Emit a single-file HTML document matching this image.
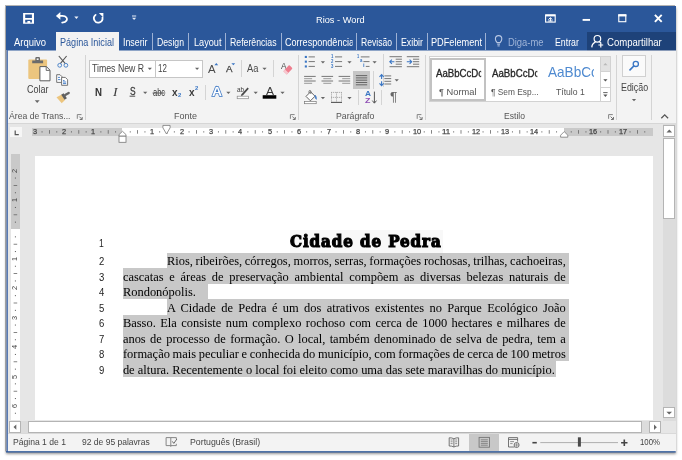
<!DOCTYPE html>
<html lang="pt-BR">
<head>
<meta charset="utf-8">
<title>Rios - Word</title>
<style>
html,body{margin:0;padding:0;}
body{width:682px;height:460px;background:#fff;overflow:hidden;position:relative;font-family:"Liberation Sans","DejaVu Sans",sans-serif;}
.a{position:absolute;}
.t{position:absolute;white-space:nowrap;transform-origin:0 50%;}
svg{position:absolute;overflow:visible;}
.win{position:absolute;left:6px;top:6px;width:669.7px;height:446px;background:#e6e6e6;box-shadow:-1px -1px 0 0 rgba(130,130,130,.6),0 2px 2.5px 0 rgba(0,0,0,.42);}
.blue{background:#2b579a;}
.rib{background:#f3f3f3;}
.vsep{position:absolute;width:1px;background:#d4d4d4;}
.tsep{position:absolute;width:1px;background:#9db1d4;top:32.5px;height:17px;}
.dl{position:absolute;white-space:nowrap;font-family:"Liberation Serif","DejaVu Serif",serif;font-size:12.46px;line-height:15.5px;color:#000;height:15.5px;}
.dj{text-align:justify;text-align-last:justify;}
.sel{position:absolute;background:#c8c8c8;}
.root{position:absolute;left:0;top:0;width:682px;height:460px;overflow:hidden;will-change:transform;}

</style>
</head>
<body>
<div class="root">
<div class="win"></div>
<div class="a blue" style="left:6px;top:6px;width:669.7px;height:44px"></div>
<div class="a rib" style="left:7px;top:50px;width:668.7px;height:73px"></div>
<div class="a" style="left:7px;top:122.5px;width:668.7px;height:1px;background:#d6d6d6"></div>
<div class="a" style="left:7px;top:50px;width:668.7px;height:1px;background:#8fa5c7"></div>
<div class="a rib" style="left:56px;top:32px;width:62.5px;height:19px"></div>
<div class="a" style="left:586.5px;top:32px;width:89.2px;height:18px;background:#1e4279"></div>
<div class="a" style="left:586.5px;top:50px;width:89.2px;height:1px;background:#8a9bb8"></div>
<span class="t" style="left:316.4px;top:14.27px;font-size:9.9px;line-height:12.87px;color:#fff;transform:scaleX(0.9355);">Rios - Word</span>
<span class="t" style="left:13.9px;top:35.64px;font-size:10.1px;line-height:13.13px;color:#fff;transform:scaleX(0.9377);">Arquivo</span>
<span class="t" style="left:60.2px;top:35.64px;font-size:10.1px;line-height:13.13px;color:#2b579a;transform:scaleX(0.8993);">Página Inicial</span>
<span class="t" style="left:123px;top:35.64px;font-size:10.1px;line-height:13.13px;color:#fff;transform:scaleX(0.8735);">Inserir</span>
<span class="t" style="left:157px;top:35.64px;font-size:10.1px;line-height:13.13px;color:#fff;transform:scaleX(0.8593);">Design</span>
<span class="t" style="left:193.5px;top:35.64px;font-size:10.1px;line-height:13.13px;color:#fff;transform:scaleX(0.9072);">Layout</span>
<span class="t" style="left:229.5px;top:35.64px;font-size:10.1px;line-height:13.13px;color:#fff;transform:scaleX(0.8631);">Referências</span>
<span class="t" style="left:284.5px;top:35.64px;font-size:10.1px;line-height:13.13px;color:#fff;transform:scaleX(0.8976);clip-path:inset(0 1.5px 0 0);">Correspondência</span>
<span class="t" style="left:361px;top:35.64px;font-size:10.1px;line-height:13.13px;color:#fff;transform:scaleX(0.8500);">Revisão</span>
<span class="t" style="left:400.5px;top:35.64px;font-size:10.1px;line-height:13.13px;color:#fff;transform:scaleX(0.8713);">Exibir</span>
<span class="t" style="left:431px;top:35.64px;font-size:10.1px;line-height:13.13px;color:#fff;transform:scaleX(0.9089);">PDFelement</span>
<span class="t" style="left:507.5px;top:35.64px;font-size:10.1px;line-height:13.13px;color:#9fb4d8;transform:scaleX(0.9304);">Diga-me</span>
<span class="t" style="left:554.6px;top:35.64px;font-size:10.1px;line-height:13.13px;color:#fff;transform:scaleX(0.8691);">Entrar</span>
<span class="t" style="left:606.7px;top:35.64px;font-size:10.1px;line-height:13.13px;color:#fff;transform:scaleX(0.9467);">Compartilhar</span>
<div class="tsep" style="left:151.5px"></div>
<div class="tsep" style="left:188.0px"></div>
<div class="tsep" style="left:224.5px"></div>
<div class="tsep" style="left:280.5px"></div>
<div class="tsep" style="left:355.8px"></div>
<div class="tsep" style="left:396.0px"></div>
<div class="tsep" style="left:426.8px"></div>
<div class="tsep" style="left:485.0px"></div>
<div class="a rib" style="left:7px;top:434.2px;width:668.7px;height:17px"></div>
<span class="t" style="left:13px;top:436.36px;font-size:9.6px;line-height:12.48px;color:#444;transform:scaleX(0.8950);">Página 1 de 1</span>
<span class="t" style="left:81.8px;top:436.36px;font-size:9.6px;line-height:12.48px;color:#444;transform:scaleX(0.8875);">92 de 95 palavras</span>
<span class="t" style="left:189.6px;top:436.36px;font-size:9.6px;line-height:12.48px;color:#444;transform:scaleX(0.9130);">Português (Brasil)</span>
<span class="t" style="left:640px;top:436.36px;font-size:9.6px;line-height:12.48px;color:#444;transform:scaleX(0.8148);">100%</span>
<div class="a" style="left:35px;top:156.4px;width:617.7px;height:264px;background:#fff"></div>
<div class="sel" style="left:167px;top:252.6px;width:401.6px;height:15.8px"></div>
<div class="sel" style="left:123px;top:268.1px;width:445.6px;height:15.8px"></div>
<div class="sel" style="left:123px;top:283.6px;width:85.1px;height:15.8px"></div>
<div class="sel" style="left:167px;top:299.1px;width:401.6px;height:15.8px"></div>
<div class="sel" style="left:123px;top:314.6px;width:445.6px;height:46.8px"></div>
<div class="sel" style="left:123px;top:361.1px;width:433.20000000000005px;height:15.8px"></div>
<div class="dl" style="left:166.9px;top:254.2px;word-spacing:-0.454px;">Rios, ribeirões, córregos, morros, serras, formações rochosas, trilhas, cachoeiras,</div>
<div class="dl" style="left:122.9px;top:269.7px;word-spacing:2.576px;">cascatas e áreas de preservação ambiental compõem as diversas belezas naturais de</div>
<div class="dl" style="left:122.9px;top:285.2px;">Rondonópolis.</div>
<div class="dl" style="left:166.9px;top:300.7px;word-spacing:2.231px;">A Cidade de Pedra é um dos atrativos existentes no Parque Ecológico João</div>
<div class="dl" style="left:122.9px;top:316.2px;word-spacing:1.296px;">Basso. Ela consiste num complexo rochoso com cerca de 1000 hectares e milhares de</div>
<div class="dl" style="left:122.9px;top:331.7px;word-spacing:1.231px;">anos de processo de formação. O local, também denominado de selva de pedra, tem a</div>
<div class="dl" style="left:122.9px;top:347.2px;word-spacing:-0.456px;">formação mais peculiar e conhecida do município, com formações de cerca de 100 metros</div>
<div class="dl" style="left:122.9px;top:362.7px;">de altura. Recentemente o local foi eleito como uma das sete maravilhas do município.</div>
<span class="t" style="left:98.8px;top:236.61px;font-size:10.3px;line-height:13.39px;color:#222;transform:scaleX(0.8371);">1</span>
<span class="t" style="left:98.7px;top:255.0px;font-size:10.3px;line-height:13.39px;color:#222;transform:scaleX(0.9243);">2</span>
<span class="t" style="left:98.7px;top:270.5px;font-size:10.3px;line-height:13.39px;color:#222;transform:scaleX(0.9243);">3</span>
<span class="t" style="left:98.7px;top:286.0px;font-size:10.3px;line-height:13.39px;color:#222;transform:scaleX(0.9243);">4</span>
<span class="t" style="left:98.7px;top:301.5px;font-size:10.3px;line-height:13.39px;color:#222;transform:scaleX(0.9243);">5</span>
<span class="t" style="left:98.7px;top:317.0px;font-size:10.3px;line-height:13.39px;color:#222;transform:scaleX(0.9243);">6</span>
<span class="t" style="left:98.7px;top:332.5px;font-size:10.3px;line-height:13.39px;color:#222;transform:scaleX(0.9243);">7</span>
<span class="t" style="left:98.7px;top:348.0px;font-size:10.3px;line-height:13.39px;color:#222;transform:scaleX(0.9243);">8</span>
<span class="t" style="left:98.7px;top:363.5px;font-size:10.3px;line-height:13.39px;color:#222;transform:scaleX(0.9243);">9</span>
<div class="a" style="left:289.5px;top:230px;width:153.8px;height:22.6px;background:#f8f8f8"></div>
<span class="t" style="left:290.4px;top:230.57px;font-size:16.2px;line-height:21.06px;color:#000;font-family:'DejaVu Serif','Liberation Serif',serif;transform:scaleX(0.9317);font-weight:bold;-webkit-text-stroke:1.2px #000;letter-spacing:1px;">Cidade de Pedra</span>
<div class="vsep" style="left:84.7px;top:55px;height:64.5px"></div>
<div class="vsep" style="left:298.1px;top:55px;height:64.5px"></div>
<div class="vsep" style="left:425.0px;top:55px;height:64.5px"></div>
<div class="vsep" style="left:616.3px;top:55px;height:64.5px"></div>
<div class="vsep" style="left:651.0px;top:55px;height:64.5px"></div>
<span class="t" style="left:27.2px;top:82.97px;font-size:10.2px;line-height:13.26px;color:#444;transform:scaleX(0.8826);">Colar</span>
<span class="t" style="left:8.8px;top:110.33px;font-size:9.8px;line-height:12.74px;color:#555;transform:scaleX(0.8823);">Área de Trans...</span>
<div class="a" style="left:89px;top:60px;width:114px;height:18px;background:#fff;box-sizing:border-box;border:1px solid #c6c6c6"></div>
<div class="a" style="left:155px;top:60px;width:1px;height:18px;background:#c6c6c6"></div>
<span class="t" style="left:92.4px;top:62.14px;font-size:10.4px;line-height:13.52px;color:#444;transform:scaleX(0.8407);">Times New R</span>
<span class="t" style="left:158.4px;top:62.14px;font-size:10.4px;line-height:13.52px;color:#444;transform:scaleX(0.7611);">12</span>
<span class="t" style="left:94.5px;top:85.64px;font-size:10.4px;line-height:13.52px;color:#333;transform:scaleX(0.9314);font-weight:bold;">N</span>
<span class="t" style="left:113.2px;top:84.93px;font-size:11.5px;line-height:14.95px;color:#3b3b3b;font-family:'Liberation Serif',serif;transform:scaleX(1.1967);font-style:italic;">I</span>
<span class="t" style="left:129.6px;top:85.01px;font-size:10.6px;line-height:13.78px;color:#3b3b3b;transform:scaleX(0.7912);-webkit-text-stroke:0.3px #3b3b3b;">S</span>
<span class="t" style="left:152.9px;top:85.57px;font-size:10.2px;line-height:13.26px;color:#3b3b3b;transform:scaleX(0.7361);">abc</span>
<span class="t" style="left:171.6px;top:85.18px;font-size:10.8px;line-height:14.04px;color:#3b3b3b;transform:scaleX(0.9309);font-weight:bold;">x</span>
<span class="t" style="left:177.6px;top:91.66px;font-size:5.6px;line-height:7.28px;color:#3a76c4;transform:scaleX(1.0560);font-weight:bold;">2</span>
<span class="t" style="left:188.8px;top:85.18px;font-size:10.8px;line-height:14.04px;color:#3b3b3b;transform:scaleX(0.9309);font-weight:bold;">x</span>
<span class="t" style="left:194.7px;top:84.96px;font-size:5.6px;line-height:7.28px;color:#3a76c4;transform:scaleX(1.0560);font-weight:bold;">2</span>
<span class="t" style="left:208.2px;top:61.72px;font-size:11.2px;line-height:14.56px;color:#4a4a4a;transform:scaleX(1.0176);">A</span>
<span class="t" style="left:225.8px;top:64.18px;font-size:8.8px;line-height:11.44px;color:#444;transform:scaleX(1.1064);-webkit-text-stroke:0.25px #444;">A</span>
<div class="vsep" style="left:240.6px;top:60px;height:16.6px"></div>
<span class="t" style="left:246.9px;top:61.54px;font-size:10.4px;line-height:13.52px;color:#4a4a4a;transform:scaleX(0.8963);">Aa</span>
<div class="vsep" style="left:272.8px;top:60px;height:16.6px"></div>
<span class="t" style="left:281px;top:60.74px;font-size:8.4px;line-height:10.92px;color:#4a4a4a;">A</span>
<div class="vsep" style="left:205.4px;top:84.6px;height:15.8px"></div>
<span class="t" style="left:212px;top:83.19px;font-size:13.4px;line-height:17.42px;color:#fff;transform:scaleX(1.0339);font-weight:bold;-webkit-text-stroke:1.5px #3a76c4;paint-order:stroke fill;">A</span>
<span class="t" style="left:236.9px;top:85.06px;font-size:7.6px;line-height:9.88px;color:#3b3b3b;transform:scaleX(0.8399);">ab</span>
<span class="t" style="left:266.2px;top:83.72px;font-size:11.2px;line-height:14.56px;color:#3b3b3b;transform:scaleX(1.0711);">A</span>
<span class="t" style="left:173.5px;top:110.33px;font-size:9.8px;line-height:12.74px;color:#555;transform:scaleX(0.9177);">Fonte</span>
<span class="t" style="left:331.2px;top:54.01px;font-size:4.6px;line-height:5.98px;color:#3a76c4;transform:scaleX(0.9366);font-weight:bold;">1</span>
<span class="t" style="left:331.2px;top:58.71px;font-size:4.6px;line-height:5.98px;color:#3a76c4;transform:scaleX(0.9366);font-weight:bold;">2</span>
<span class="t" style="left:331.2px;top:63.51px;font-size:4.6px;line-height:5.98px;color:#3a76c4;transform:scaleX(0.9366);font-weight:bold;">3</span>
<span class="t" style="left:357.2px;top:53.61px;font-size:4.6px;line-height:5.98px;color:#3a76c4;transform:scaleX(0.8585);font-weight:bold;">1</span>
<span class="t" style="left:359.6px;top:58.41px;font-size:4.6px;line-height:5.98px;color:#3a76c4;transform:scaleX(0.9366);font-weight:bold;">a</span>
<span class="t" style="left:362.6px;top:63.21px;font-size:4.6px;line-height:5.98px;color:#3a76c4;transform:scaleX(1.2488);font-weight:bold;">i</span>
<div class="vsep" style="left:383.3px;top:53.5px;height:33.8px"></div>
<div class="a" style="left:353.2px;top:71.3px;width:17px;height:17.7px;background:#c6c6c6"></div>
<div class="vsep" style="left:373.3px;top:71.3px;height:17.7px"></div>
<div class="vsep" style="left:358.2px;top:89.5px;height:15px"></div>
<span class="t" style="left:365.2px;top:89.26px;font-size:7.6px;line-height:9.88px;color:#3a76c4;transform:scaleX(1.0940);font-weight:bold;">A</span>
<span class="t" style="left:365.4px;top:95.86px;font-size:7.6px;line-height:9.88px;color:#8f4fb5;transform:scaleX(1.1636);font-weight:bold;">Z</span>
<div class="vsep" style="left:381.4px;top:89.5px;height:15px"></div>
<span class="t" style="left:390.2px;top:90.07px;font-size:12.2px;line-height:15.86px;color:#666;transform:scaleX(1.1303);">¶</span>
<span class="t" style="left:336.2px;top:110.33px;font-size:9.8px;line-height:12.74px;color:#555;transform:scaleX(0.8924);">Parágrafo</span>
<div class="a" style="left:429.2px;top:56.2px;width:181.6px;height:46.2px;background:#fff;box-sizing:border-box;border:1px solid #d2d2d2"></div>
<div class="a" style="left:430.4px;top:57.5px;width:55.6px;height:43.6px;box-sizing:border-box;border:2px solid #c2c2c2"></div>
<span class="t" style="left:435.5px;top:67.14px;font-size:10.1px;line-height:13.13px;color:#262626;transform:scaleX(0.9539);clip-path:inset(0 2px 0 0);-webkit-text-stroke:0.3px #262626;">AaBbCcDc</span>
<span class="t" style="left:439.3px;top:85.83px;font-size:9.8px;line-height:12.74px;color:#555;transform:scaleX(0.9479);">¶ Normal</span>
<span class="t" style="left:491.7px;top:67.14px;font-size:10.1px;line-height:13.13px;color:#262626;transform:scaleX(0.9580);clip-path:inset(0 2px 0 0);-webkit-text-stroke:0.3px #262626;">AaBbCcDc</span>
<span class="t" style="left:490.8px;top:85.83px;font-size:9.8px;line-height:12.74px;color:#555;transform:scaleX(0.8514);">¶ Sem Esp...</span>
<span class="t" style="left:547.8px;top:63.11px;font-size:14.6px;line-height:18.98px;color:#4f8ad0;transform:scaleX(0.9300);clip-path:inset(0 4.2px 0 0);">AaBbCc</span>
<span class="t" style="left:556px;top:85.83px;font-size:9.8px;line-height:12.74px;color:#555;transform:scaleX(0.8811);">Título 1</span>
<div class="a" style="left:599.9px;top:56.2px;width:10.9px;height:46.2px;background:#fff;box-sizing:border-box;border:1px solid #d2d2d2"></div>
<div class="a" style="left:599.9px;top:56.2px;width:10.9px;height:16px;background:#e2e2e2;box-sizing:border-box;border:1px solid #d2d2d2"></div>
<div class="a" style="left:599.9px;top:87.1px;width:10.9px;height:1px;background:#d2d2d2"></div>
<span class="t" style="left:504.1px;top:110.33px;font-size:9.8px;line-height:12.74px;color:#555;transform:scaleX(0.8761);">Estilo</span>
<div class="a" style="left:622.1px;top:54.5px;width:23.6px;height:22.8px;background:#fafafa;box-sizing:border-box;border:1px solid #d0d0d0"></div>
<span class="t" style="left:620.7px;top:81.24px;font-size:10.4px;line-height:13.52px;color:#444;transform:scaleX(0.8527);">Edição</span>
<div class="a" style="left:31.7px;top:127.9px;width:620.9px;height:7.699999999999989px;background:#c9c9c9"></div>
<div class="a" style="left:121.8px;top:127.9px;width:442.40000000000003px;height:7.699999999999989px;background:#fff"></div>
<span class="t" style="left:32.65px;top:126.7px;font-size:8px;line-height:10.4px;color:#444;transform:scaleX(0.9207);-webkit-text-stroke:0.25px #444;">3</span>
<span class="t" style="left:62.05px;top:126.7px;font-size:8px;line-height:10.4px;color:#444;transform:scaleX(0.9207);-webkit-text-stroke:0.25px #444;">2</span>
<span class="t" style="left:91.45px;top:126.7px;font-size:8px;line-height:10.4px;color:#444;transform:scaleX(0.9207);-webkit-text-stroke:0.25px #444;">1</span>
<span class="t" style="left:150.25px;top:126.7px;font-size:8px;line-height:10.4px;color:#444;transform:scaleX(0.9207);-webkit-text-stroke:0.25px #444;">1</span>
<span class="t" style="left:179.65px;top:126.7px;font-size:8px;line-height:10.4px;color:#444;transform:scaleX(0.9207);-webkit-text-stroke:0.25px #444;">2</span>
<span class="t" style="left:209.05px;top:126.7px;font-size:8px;line-height:10.4px;color:#444;transform:scaleX(0.9207);-webkit-text-stroke:0.25px #444;">3</span>
<span class="t" style="left:238.45px;top:126.7px;font-size:8px;line-height:10.4px;color:#444;transform:scaleX(0.9207);-webkit-text-stroke:0.25px #444;">4</span>
<span class="t" style="left:267.85px;top:126.7px;font-size:8px;line-height:10.4px;color:#444;transform:scaleX(0.9207);-webkit-text-stroke:0.25px #444;">5</span>
<span class="t" style="left:297.25px;top:126.7px;font-size:8px;line-height:10.4px;color:#444;transform:scaleX(0.9207);-webkit-text-stroke:0.25px #444;">6</span>
<span class="t" style="left:326.65px;top:126.7px;font-size:8px;line-height:10.4px;color:#444;transform:scaleX(0.9207);-webkit-text-stroke:0.25px #444;">7</span>
<span class="t" style="left:356.05px;top:126.7px;font-size:8px;line-height:10.4px;color:#444;transform:scaleX(0.9207);-webkit-text-stroke:0.25px #444;">8</span>
<span class="t" style="left:385.45px;top:126.7px;font-size:8px;line-height:10.4px;color:#444;transform:scaleX(0.9207);-webkit-text-stroke:0.25px #444;">9</span>
<span class="t" style="left:412.8px;top:126.7px;font-size:8px;line-height:10.4px;color:#444;transform:scaleX(0.9207);-webkit-text-stroke:0.25px #444;">10</span>
<span class="t" style="left:442.2px;top:126.7px;font-size:8px;line-height:10.4px;color:#444;transform:scaleX(0.9865);-webkit-text-stroke:0.25px #444;">11</span>
<span class="t" style="left:471.6px;top:126.7px;font-size:8px;line-height:10.4px;color:#444;transform:scaleX(0.9207);-webkit-text-stroke:0.25px #444;">12</span>
<span class="t" style="left:501.0px;top:126.7px;font-size:8px;line-height:10.4px;color:#444;transform:scaleX(0.9207);-webkit-text-stroke:0.25px #444;">13</span>
<span class="t" style="left:530.4px;top:126.7px;font-size:8px;line-height:10.4px;color:#444;transform:scaleX(0.9207);-webkit-text-stroke:0.25px #444;">14</span>
<span class="t" style="left:589.2px;top:126.7px;font-size:8px;line-height:10.4px;color:#444;transform:scaleX(0.9207);-webkit-text-stroke:0.25px #444;">16</span>
<span class="t" style="left:618.6px;top:126.7px;font-size:8px;line-height:10.4px;color:#444;transform:scaleX(0.9207);-webkit-text-stroke:0.25px #444;">17</span>
<div class="a" style="left:9.8px;top:126.6px;width:12.7px;height:10.6px;background:#f6f6f6"></div>
<div class="a" style="left:11px;top:154.4px;width:8.8px;height:266px;background:#fff"></div>
<div class="a" style="left:11px;top:154.4px;width:8.8px;height:75.1px;background:#c9c9c9"></div>
<span class="t" style="left:15.4px;top:200.1px;font-size:8px;line-height:8px;color:#444;transform:translate(-50%,-50%) rotate(-90deg) scaleX(0.92);transform-origin:50% 50%;">1</span>
<span class="t" style="left:15.4px;top:170.7px;font-size:8px;line-height:8px;color:#444;transform:translate(-50%,-50%) rotate(-90deg) scaleX(0.92);transform-origin:50% 50%;">2</span>
<span class="t" style="left:15.4px;top:258.9px;font-size:8px;line-height:8px;color:#444;transform:translate(-50%,-50%) rotate(-90deg) scaleX(0.92);transform-origin:50% 50%;">1</span>
<span class="t" style="left:15.4px;top:288.3px;font-size:8px;line-height:8px;color:#444;transform:translate(-50%,-50%) rotate(-90deg) scaleX(0.92);transform-origin:50% 50%;">2</span>
<span class="t" style="left:15.4px;top:317.7px;font-size:8px;line-height:8px;color:#444;transform:translate(-50%,-50%) rotate(-90deg) scaleX(0.92);transform-origin:50% 50%;">3</span>
<span class="t" style="left:15.4px;top:347.1px;font-size:8px;line-height:8px;color:#444;transform:translate(-50%,-50%) rotate(-90deg) scaleX(0.92);transform-origin:50% 50%;">4</span>
<span class="t" style="left:15.4px;top:376.5px;font-size:8px;line-height:8px;color:#444;transform:translate(-50%,-50%) rotate(-90deg) scaleX(0.92);transform-origin:50% 50%;">5</span>
<span class="t" style="left:15.4px;top:405.9px;font-size:8px;line-height:8px;color:#444;transform:translate(-50%,-50%) rotate(-90deg) scaleX(0.92);transform-origin:50% 50%;">6</span>
<div class="a" style="left:663.3px;top:123px;width:12.4px;height:298px;background:#dcdcdc"></div>
<div class="a" style="left:663.3px;top:125.4px;width:11.6px;height:11.6px;box-sizing:border-box;border:1px solid #b4b4b4;background:#fff"></div>
<div class="a" style="left:663.3px;top:137.7px;width:11.6px;height:81.4px;box-sizing:border-box;border:1px solid #b4b4b4;background:#fff"></div>
<div class="a" style="left:663.3px;top:407px;width:11.6px;height:11.4px;box-sizing:border-box;border:1px solid #b4b4b4;background:#fff"></div>
<div class="a" style="left:7px;top:420.6px;width:668.7px;height:12.9px;background:#e6e6e6"></div>
<div class="a" style="left:20.6px;top:421.4px;width:628.8px;height:11.4px;background:#dcdcdc"></div>
<div class="a" style="left:9px;top:421.4px;width:11.6px;height:11.3px;box-sizing:border-box;border:1px solid #b4b4b4;background:#fff"></div>
<div class="a" style="left:28px;top:421.4px;width:614.4px;height:11.3px;box-sizing:border-box;border:1px solid #b4b4b4;background:#fff"></div>
<div class="a" style="left:649.3px;top:421.4px;width:11.4px;height:11.3px;box-sizing:border-box;border:1px solid #b4b4b4;background:#fff"></div>
<div class="a" style="left:7px;top:433.4px;width:668.7px;height:1px;background:#d9d9d9"></div>
<div class="a" style="left:469.3px;top:434.3px;width:29.4px;height:16.6px;background:#c8c8c8"></div>
<svg width="682" height="460" viewBox="0 0 682 460" style="left:0;top:0">
<rect x="5.6" y="50" width="1" height="402" fill="#9a9a9a"/>
<rect x="6.5" y="50" width="1.4" height="402" fill="#4a6fae"/>
<rect x="6" y="451.2" width="669.7" height="1.3" fill="#2b579a"/>
<rect x="28.3" y="59.6" width="18.8" height="19.4" rx="1" fill="#ecc57e"/>
<path d="M32.2 63.2 V60.6 H35.3 V58.2 Q35.3 57.1 36.4 57.1 H38.9 Q40 57.1 40 58.2 V60.6 H43.1 V63.2 Z" fill="#6b6b6b"/>
<rect x="36.7" y="58.4" width="1.9" height="1.6" fill="#f3f3f3"/>
<path d="M39.9 66.6 H46.4 L50 70.2 V80.8 H39.9 Z" fill="#fff" stroke="#5a5a5a" stroke-width="1" stroke-linejoin="miter"/>
<path d="M46.2 66.8 V70.4 H49.8" fill="none" stroke="#5a5a5a" stroke-width="0.9"/>
<path d="M34.8 100.3 H39.6 L37.2 102.9 Z" fill="#666"/>
<path d="M58.8 56 L65.3 63.6 M66.6 56 L60.3 63.6" stroke="#555" stroke-width="1.1" fill="none"/>
<circle cx="59.7" cy="65.3" r="1.9" fill="none" stroke="#4c84c8" stroke-width="1"/>
<circle cx="65.9" cy="65.3" r="1.9" fill="none" stroke="#4c84c8" stroke-width="1"/>
<path d="M56.7 74.7 H60 L62 76.7 V82.4 H56.7 Z" fill="#fff" stroke="#666" stroke-width="0.9"/>
<path d="M61.6 77.4 H65.3 L67.6 79.7 V85.3 H61.6 Z" fill="#fff" stroke="#666" stroke-width="0.9"/>
<path d="M58 77.4 H60 M58 79.6 H60.4 M63 80.6 H64.6 M63 82 H66.2 M63 83.6 H66.2" stroke="#3a76c4" stroke-width="0.9"/>
<path d="M56.5 97.2 L61.8 94.6 L65 100 L61.7 103.3 Z" fill="#ecc57e"/>
<path d="M61.2 94.7 L63.6 93.3 L66.9 98.2 L64.6 99.7 Z" fill="#5f5f5f"/>
<path d="M65.2 95 L68.7 92.9" stroke="#666" stroke-width="2.3" stroke-linecap="round"/>
<path d="M77.3 118.8 V114.6 H81.5" fill="none" stroke="#777" stroke-width="0.9"/>
<path d="M79.3 116.6 L81.89999999999999 119.19999999999999 M82.2 117.0 V119.5 H79.7" fill="none" stroke="#666" stroke-width="0.9"/>
<path d="M147.70000000000002 67.8 H151.9 L149.8 70.1 Z" fill="#666"/>
<path d="M195.0 67.8 H199.2 L197.1 70.1 Z" fill="#666"/>
<path d="M129.6 96.2 H135.2" stroke="#3b3b3b" stroke-width="0.9"/>
<path d="M143.1 91.8 H147.29999999999998 L145.2 94.1 Z" fill="#666"/>
<path d="M152.6 93 H165.3" stroke="#3b3b3b" stroke-width="0.8"/>
<path d="M214.4 65.2 H218.2 L216.3 63.1 Z" fill="#3a76c4"/>
<path d="M231.4 63.2 H235.2 L233.3 65.3 Z" fill="#3a76c4"/>
<path d="M262.4 67.8 H266.6 L264.5 70.1 Z" fill="#666"/>
<path d="M283.4 71.2 L288.6 65.6 Q289.2 65 289.8 65.6 L292 67.8 Q292.6 68.4 292 69 L286.8 74.4 Z" fill="#ee7d8e"/>
<path d="M283.4 71.2 L285 69.5 L288.4 72.8 L286.8 74.4 Z" fill="#f7c9d0"/>
<path d="M226.3 91.8 H230.5 L228.4 94.1 Z" fill="#666"/>
<path d="M241.2 94.6 L247.6 87.6 L248.8 88.7 L242.8 95.6 L240.9 96 Z" fill="#4a4a4a"/>
<rect x="237.2" y="96.2" width="11.2" height="2.5" fill="#fff" stroke="#8a8a8a" stroke-width="0.7"/>
<path d="M253.6 91.8 H257.8 L255.7 94.1 Z" fill="#666"/>
<rect x="262.7" y="95.2" width="13.6" height="3.5" fill="#000"/>
<path d="M280.4 91.8 H284.6 L282.5 94.1 Z" fill="#666"/>
<path d="M290.4 118.8 V114.6 H294.59999999999997" fill="none" stroke="#777" stroke-width="0.9"/>
<path d="M292.4 116.6 L295.0 119.19999999999999 M295.29999999999995 117.0 V119.5 H292.79999999999995" fill="none" stroke="#666" stroke-width="0.9"/>
<rect x="304.8" y="55.9" width="2.1" height="2.1" fill="#3a76c4"/>
<path d="M308.6 56.9 H314.9" stroke="#777" stroke-width="1"/>
<rect x="304.8" y="60.6" width="2.1" height="2.1" fill="#3a76c4"/>
<path d="M308.6 61.6 H314.9" stroke="#777" stroke-width="1"/>
<rect x="304.8" y="65.4" width="2.1" height="2.1" fill="#3a76c4"/>
<path d="M308.6 66.4 H314.9" stroke="#777" stroke-width="1"/>
<path d="M320.79999999999995 61.2 H325.0 L322.9 63.5 Z" fill="#666"/>
<path d="M335 56.9 H342.1" stroke="#777" stroke-width="1"/>
<path d="M335 61.6 H342.1" stroke="#777" stroke-width="1"/>
<path d="M335 66.4 H342.1" stroke="#777" stroke-width="1"/>
<path d="M347.4 61.2 H351.6 L349.5 63.5 Z" fill="#666"/>
<path d="M360.8 56.9 H369.5" stroke="#777" stroke-width="1"/>
<path d="M363.4 61.6 H369.5" stroke="#777" stroke-width="1"/>
<path d="M365.8 66.4 H369.5" stroke="#777" stroke-width="1"/>
<path d="M372.5 61.2 H376.70000000000005 L374.6 63.5 Z" fill="#666"/>
<path d="M389.5 56.7 H401.9" stroke="#777" stroke-width="1"/>
<path d="M389.5 66.7 H401.9" stroke="#777" stroke-width="1"/>
<path d="M395.7 59.2 H401.9" stroke="#777" stroke-width="1"/>
<path d="M395.7 61.7 H401.9" stroke="#777" stroke-width="1"/>
<path d="M395.7 64.2 H401.9" stroke="#777" stroke-width="1"/>
<path d="M389.8 61.7 H394.4 M391.9 59.6 L389.8 61.7 L391.9 63.8" fill="none" stroke="#3a76c4" stroke-width="1.1"/>
<path d="M406.8 56.7 H419.2" stroke="#777" stroke-width="1"/>
<path d="M406.8 66.7 H419.2" stroke="#777" stroke-width="1"/>
<path d="M413.0 59.2 H419.2" stroke="#777" stroke-width="1"/>
<path d="M413.0 61.7 H419.2" stroke="#777" stroke-width="1"/>
<path d="M413.0 64.2 H419.2" stroke="#777" stroke-width="1"/>
<path d="M406.8 61.7 H411.40000000000003 M409.6 59.6 L411.7 61.7 L409.6 63.8" fill="none" stroke="#3a76c4" stroke-width="1.1"/>
<path d="M304.1 76.4 H315.70000000000005" stroke="#777" stroke-width="1"/>
<path d="M304.1 78.7 H312.1" stroke="#999" stroke-width="1"/>
<path d="M304.1 81.0 H315.70000000000005" stroke="#777" stroke-width="1"/>
<path d="M304.1 83.3 H312.1" stroke="#999" stroke-width="1"/>
<path d="M321.5 76.4 H333.1" stroke="#777" stroke-width="1"/>
<path d="M323.3 78.7 H331.3" stroke="#999" stroke-width="1"/>
<path d="M321.5 81.0 H333.1" stroke="#777" stroke-width="1"/>
<path d="M323.3 83.3 H331.3" stroke="#999" stroke-width="1"/>
<path d="M338.6 76.4 H350.20000000000005" stroke="#777" stroke-width="1"/>
<path d="M342.20000000000005 78.7 H350.20000000000005" stroke="#999" stroke-width="1"/>
<path d="M338.6 81.0 H350.20000000000005" stroke="#777" stroke-width="1"/>
<path d="M342.20000000000005 83.3 H350.20000000000005" stroke="#999" stroke-width="1"/>
<path d="M355.9 75.6 H367.2" stroke="#666" stroke-width="1"/>
<path d="M355.9 77.9 H367.2" stroke="#666" stroke-width="1"/>
<path d="M355.9 80.2 H367.2" stroke="#666" stroke-width="1"/>
<path d="M355.9 82.5 H367.2" stroke="#666" stroke-width="1"/>
<path d="M355.9 84.8 H367.2" stroke="#666" stroke-width="1"/>
<path d="M384.4 75.9 H391.2" stroke="#777" stroke-width="1"/>
<path d="M384.4 78.6 H391.2" stroke="#777" stroke-width="1"/>
<path d="M384.4 81.3 H391.2" stroke="#777" stroke-width="1"/>
<path d="M384.4 84 H391.2" stroke="#777" stroke-width="1"/>
<path d="M381.6 74.8 V79 M381.6 81.2 V85.6 M379.5 76.9 L381.6 74.6 L383.7 76.9 M379.5 83.4 L381.6 85.7 L383.7 83.4" fill="none" stroke="#3a76c4" stroke-width="1.1"/>
<path d="M394.59999999999997 79.2 H398.8 L396.7 81.5 Z" fill="#666"/>
<path d="M306 96.4 L310.6 91.8 L315 96.2 L310.4 100.8 Z" fill="#fff" stroke="#555" stroke-width="0.9" stroke-linejoin="round"/>
<path d="M309 93.2 V91.4 Q309 90.5 309.9 90.5 Q310.8 90.5 310.8 91.4 V94" fill="none" stroke="#555" stroke-width="0.8"/>
<path d="M315 95 Q316.9 96.6 316.4 99.4 Q314.8 98.6 315 95 Z" fill="#3a76c4" stroke="#3a76c4" stroke-width="0.6"/>
<rect x="304.4" y="101.4" width="11.8" height="2.3" fill="#fff" stroke="#777" stroke-width="0.7"/>
<path d="M320.79999999999995 96.9 H325.0 L322.9 99.2 Z" fill="#666"/>
<path d="M331.2 92.4 H341.8 M331.2 97.4 H341.8 M331.5 92.4 V102 M336.5 92.4 V102 M341.5 92.4 V102" fill="none" stroke="#8a8a8a" stroke-width="0.8" stroke-dasharray="1 1"/>
<path d="M331 102.4 H342" stroke="#555" stroke-width="1.1"/>
<path d="M347.4 96.9 H351.6 L349.5 99.2 Z" fill="#666"/>
<path d="M374.4 91.6 V103 M372.3 100.6 L374.4 103.2 L376.5 100.6" fill="none" stroke="#555" stroke-width="1"/>
<path d="M417.2 118.8 V114.6 H421.4" fill="none" stroke="#777" stroke-width="0.9"/>
<path d="M419.2 116.6 L421.8 119.19999999999999 M422.09999999999997 117.0 V119.5 H419.59999999999997" fill="none" stroke="#666" stroke-width="0.9"/>
<path d="M603.3 65.3 H607.5 L605.4 63 Z" fill="#b8b8b8"/>
<path d="M603.3 79.2 H607.5 L605.4 81.5 Z" fill="#555"/>
<path d="M603.2 92.6 H607.6" stroke="#555" stroke-width="0.9"/>
<path d="M603.3 94.6 H607.5 L605.4 96.89999999999999 Z" fill="#555"/>
<path d="M608.6 118.8 V114.6 H612.8000000000001" fill="none" stroke="#777" stroke-width="0.9"/>
<path d="M610.6 116.6 L613.2 119.19999999999999 M613.5 117.0 V119.5 H611.0" fill="none" stroke="#666" stroke-width="0.9"/>
<circle cx="635.8" cy="63.9" r="2.6" fill="none" stroke="#3a76c4" stroke-width="1.3"/>
<path d="M633.8 66 L630 69.9" stroke="#3a76c4" stroke-width="1.7" stroke-linecap="round"/>
<path d="M631.9 99 H636.1 L634 101.3 Z" fill="#666"/>
<path d="M661.3 118.2 L664.7 114.9 L668.1 118.2" fill="none" stroke="#555" stroke-width="1.3"/>
<path fill-rule="evenodd" fill="#fff" d="M23.1 12.9 H34 V23.7 H23.1 Z M25.2 14.4 V18 H31.9 V14.4 Z M25.2 19.8 V22.5 H27.4 V20.9 H30.2 V22.5 H31.9 V19.8 Z"/>
<path d="M59 15.9 H62.4 C66.4 15.9 67.7 18.6 66.6 20.5 C65.7 22 64 22.5 62.2 22.7" fill="none" stroke="#fff" stroke-width="1.8" stroke-linecap="round"/>
<path d="M55.9 15.9 L60.4 12.1 V19.7 Z" fill="#fff"/>
<path d="M74.3 16.6 H78.5 L76.4 19 Z" fill="#eef2f9"/>
<path d="M102.5 17.6 A4.3 4.3 0 1 1 95.6 14.9" fill="none" stroke="#fff" stroke-width="1.8" stroke-linecap="round"/>
<path d="M98.9 12.9 H103.4 V17.6 Z" fill="#fff"/>
<path d="M132 16 H136.2" stroke="#e6ecf6" stroke-width="1"/>
<path d="M132 17.7 H136.2 L134.1 20 Z" fill="#e6ecf6"/>
<rect x="545.6" y="14.9" width="9.6" height="7.2" fill="none" stroke="#fff" stroke-width="1.1"/>
<path d="M545.6 15.5 H555.2" stroke="#fff" stroke-width="1.8"/>
<path d="M550.4 21.2 V18 M548.4 19.6 L550.4 17.7 L552.4 19.6 M548.2 21 H552.6" fill="none" stroke="#fff" stroke-width="1"/>
<path d="M582.6 19.9 H590" stroke="#fff" stroke-width="1.9"/>
<rect x="618.8" y="15.2" width="7" height="6.5" fill="none" stroke="#fff" stroke-width="1.1"/>
<path d="M618.2 15.3 H626.4" stroke="#fff" stroke-width="2.3"/>
<path d="M654.9 14.9 L661.7 21.9 M661.7 14.9 L654.9 21.9" stroke="#fff" stroke-width="1.9"/>
<path d="M497.1 42.6 Q495.4 40.6 495.4 38.9 Q495.4 35.6 498.6 35.6 Q501.8 35.6 501.8 38.9 Q501.8 40.6 500.1 42.6 Z" fill="none" stroke="#b9c8e4" stroke-width="1.1"/>
<path d="M497.2 44.2 H500 M497.5 45.9 H499.7" stroke="#b9c8e4" stroke-width="1"/>
<circle cx="597.4" cy="38.8" r="3.3" fill="none" stroke="#fff" stroke-width="1.2"/>
<path d="M591.8 47.4 Q592 43.6 595.4 42.2 M599.4 42.2 Q600.2 42.5 600.8 43" fill="none" stroke="#fff" stroke-width="1.3"/>
<path d="M598.4 45 H603.2 M600.8 42.6 V47.4" stroke="#fff" stroke-width="1.2"/>
<rect x="41.55" y="131.4" width="1" height="1" fill="#555"/>
<rect x="56.25" y="131.4" width="1" height="1" fill="#555"/>
<rect x="49.00" y="130.1" width="0.8" height="3.6" fill="#666"/>
<rect x="70.95" y="131.4" width="1" height="1" fill="#555"/>
<rect x="85.65" y="131.4" width="1" height="1" fill="#555"/>
<rect x="78.40" y="130.1" width="0.8" height="3.6" fill="#666"/>
<rect x="100.35" y="131.4" width="1" height="1" fill="#555"/>
<rect x="115.05" y="131.4" width="1" height="1" fill="#555"/>
<rect x="107.80" y="130.1" width="0.8" height="3.6" fill="#666"/>
<rect x="129.75" y="131.4" width="1" height="1" fill="#555"/>
<rect x="144.45" y="131.4" width="1" height="1" fill="#555"/>
<rect x="137.20" y="130.1" width="0.8" height="3.6" fill="#666"/>
<rect x="159.15" y="131.4" width="1" height="1" fill="#555"/>
<rect x="173.85" y="131.4" width="1" height="1" fill="#555"/>
<rect x="166.60" y="130.1" width="0.8" height="3.6" fill="#666"/>
<rect x="188.55" y="131.4" width="1" height="1" fill="#555"/>
<rect x="203.25" y="131.4" width="1" height="1" fill="#555"/>
<rect x="196.00" y="130.1" width="0.8" height="3.6" fill="#666"/>
<rect x="217.95" y="131.4" width="1" height="1" fill="#555"/>
<rect x="232.65" y="131.4" width="1" height="1" fill="#555"/>
<rect x="225.40" y="130.1" width="0.8" height="3.6" fill="#666"/>
<rect x="247.35" y="131.4" width="1" height="1" fill="#555"/>
<rect x="262.05" y="131.4" width="1" height="1" fill="#555"/>
<rect x="254.80" y="130.1" width="0.8" height="3.6" fill="#666"/>
<rect x="276.75" y="131.4" width="1" height="1" fill="#555"/>
<rect x="291.45" y="131.4" width="1" height="1" fill="#555"/>
<rect x="284.20" y="130.1" width="0.8" height="3.6" fill="#666"/>
<rect x="306.15" y="131.4" width="1" height="1" fill="#555"/>
<rect x="320.85" y="131.4" width="1" height="1" fill="#555"/>
<rect x="313.60" y="130.1" width="0.8" height="3.6" fill="#666"/>
<rect x="335.55" y="131.4" width="1" height="1" fill="#555"/>
<rect x="350.25" y="131.4" width="1" height="1" fill="#555"/>
<rect x="343.00" y="130.1" width="0.8" height="3.6" fill="#666"/>
<rect x="364.95" y="131.4" width="1" height="1" fill="#555"/>
<rect x="379.65" y="131.4" width="1" height="1" fill="#555"/>
<rect x="372.40" y="130.1" width="0.8" height="3.6" fill="#666"/>
<rect x="394.35" y="131.4" width="1" height="1" fill="#555"/>
<rect x="409.05" y="131.4" width="1" height="1" fill="#555"/>
<rect x="401.80" y="130.1" width="0.8" height="3.6" fill="#666"/>
<rect x="423.75" y="131.4" width="1" height="1" fill="#555"/>
<rect x="438.45" y="131.4" width="1" height="1" fill="#555"/>
<rect x="431.20" y="130.1" width="0.8" height="3.6" fill="#666"/>
<rect x="453.15" y="131.4" width="1" height="1" fill="#555"/>
<rect x="467.85" y="131.4" width="1" height="1" fill="#555"/>
<rect x="460.60" y="130.1" width="0.8" height="3.6" fill="#666"/>
<rect x="482.55" y="131.4" width="1" height="1" fill="#555"/>
<rect x="497.25" y="131.4" width="1" height="1" fill="#555"/>
<rect x="490.00" y="130.1" width="0.8" height="3.6" fill="#666"/>
<rect x="511.95" y="131.4" width="1" height="1" fill="#555"/>
<rect x="526.65" y="131.4" width="1" height="1" fill="#555"/>
<rect x="519.40" y="130.1" width="0.8" height="3.6" fill="#666"/>
<rect x="541.35" y="131.4" width="1" height="1" fill="#555"/>
<rect x="556.05" y="131.4" width="1" height="1" fill="#555"/>
<rect x="548.80" y="130.1" width="0.8" height="3.6" fill="#666"/>
<rect x="570.75" y="131.4" width="1" height="1" fill="#555"/>
<rect x="585.45" y="131.4" width="1" height="1" fill="#555"/>
<rect x="578.20" y="130.1" width="0.8" height="3.6" fill="#666"/>
<rect x="600.15" y="131.4" width="1" height="1" fill="#555"/>
<rect x="614.85" y="131.4" width="1" height="1" fill="#555"/>
<rect x="607.60" y="130.1" width="0.8" height="3.6" fill="#666"/>
<rect x="629.55" y="131.4" width="1" height="1" fill="#555"/>
<rect x="644.25" y="131.4" width="1" height="1" fill="#555"/>
<rect x="637.00" y="130.1" width="0.8" height="3.6" fill="#666"/>
<path d="M15.2 130.4 V134.6 H18.8" fill="none" stroke="#555" stroke-width="1.2"/>
<path d="M119 136.2 V134.6 L122.5 131.3 L126 134.6 V136.2 Z" stroke="#777" stroke-width="0.8" fill="#fff"/>
<rect x="119" y="136.2" width="7" height="6.1" stroke="#777" stroke-width="0.8" fill="#fff"/>
<path d="M162.9 125.4 H170.1 V127.8 L166.5 134 L162.9 127.8 Z" stroke="#777" stroke-width="0.8" fill="#fff"/>
<path d="M560.6 137.2 V135.2 L564.2 131.6 L567.8 135.2 V137.2 Z" stroke="#777" stroke-width="0.8" fill="#fff"/>
<rect x="14.9" y="177.55" width="1" height="1" fill="#555"/>
<rect x="14.9" y="192.25" width="1" height="1" fill="#555"/>
<rect x="13.6" y="185.00" width="3.6" height="0.8" fill="#666"/>
<rect x="14.9" y="206.95" width="1" height="1" fill="#555"/>
<rect x="14.9" y="221.65" width="1" height="1" fill="#555"/>
<rect x="13.6" y="214.40" width="3.6" height="0.8" fill="#666"/>
<rect x="14.9" y="236.35" width="1" height="1" fill="#555"/>
<rect x="14.9" y="251.05" width="1" height="1" fill="#555"/>
<rect x="13.6" y="243.80" width="3.6" height="0.8" fill="#666"/>
<rect x="14.9" y="265.75" width="1" height="1" fill="#555"/>
<rect x="14.9" y="280.45" width="1" height="1" fill="#555"/>
<rect x="13.6" y="273.20" width="3.6" height="0.8" fill="#666"/>
<rect x="14.9" y="295.15" width="1" height="1" fill="#555"/>
<rect x="14.9" y="309.85" width="1" height="1" fill="#555"/>
<rect x="13.6" y="302.60" width="3.6" height="0.8" fill="#666"/>
<rect x="14.9" y="324.55" width="1" height="1" fill="#555"/>
<rect x="14.9" y="339.25" width="1" height="1" fill="#555"/>
<rect x="13.6" y="332.00" width="3.6" height="0.8" fill="#666"/>
<rect x="14.9" y="353.95" width="1" height="1" fill="#555"/>
<rect x="14.9" y="368.65" width="1" height="1" fill="#555"/>
<rect x="13.6" y="361.40" width="3.6" height="0.8" fill="#666"/>
<rect x="14.9" y="383.35" width="1" height="1" fill="#555"/>
<rect x="14.9" y="398.05" width="1" height="1" fill="#555"/>
<rect x="13.6" y="390.80" width="3.6" height="0.8" fill="#666"/>
<rect x="14.9" y="412.75" width="1" height="1" fill="#555"/>
<path d="M666.5 132.4 H672.1 L669.3 129.6 Z" fill="#666"/>
<path d="M666.4 411.8 H672 L669.2 414.6 Z" fill="#666"/>
<path d="M16.3 424.4 V429.8 L13.5 427.1 Z" fill="#666"/>
<path d="M654 424.5 V429.9 L656.8 427.2 Z" fill="#666"/>
<path d="M170.8 437.6 H166.1 V445.6 H170.8 Z M170.8 437.6 H176.3 V439 M170.8 445.6 H176.3 V443.8 M170.8 445.6 V446.8" fill="none" stroke="#7a7a7a" stroke-width="0.9"/>
<path d="M172.3 441.4 L173.8 443.4 L176.9 439" fill="none" stroke="#666" stroke-width="1"/>
<path d="M453.9 438.6 V447 M449.2 437.8 Q451.8 437.6 453.9 438.8 Q456 437.6 458.6 437.8 V446 Q456 445.8 453.9 447 Q451.8 445.8 449.2 446 Z" fill="none" stroke="#666" stroke-width="0.9"/>
<path d="M450.6 440 H452.6 M450.6 441.8 H452.6 M450.6 443.6 H452.6 M455.2 440 H457.2 M455.2 441.8 H457.2 M455.2 443.6 H457.2" stroke="#666" stroke-width="0.7"/>
<rect x="479.1" y="437.4" width="10.4" height="9.8" fill="none" stroke="#767676" stroke-width="0.9"/>
<path d="M480.8 439.8 H487.8 M480.8 441.6 H487.8 M480.8 443.4 H487.8 M480.8 445.2 H487.8" stroke="#767676" stroke-width="0.8"/>
<path d="M514.6 447 H508.5 V437.6 H517.6 V441.6 M508.5 439.4 H517.6" fill="none" stroke="#666" stroke-width="0.9"/>
<path d="M510.2 441.6 H514 M510.2 443.6 H512.6" stroke="#666" stroke-width="0.7"/>
<circle cx="516.6" cy="445" r="2.5" fill="#f3f3f3" stroke="#666" stroke-width="0.9"/>
<path d="M514.2 445 H519 M516.6 442.6 V447.4" stroke="#666" stroke-width="0.6"/>
<path d="M532.4 442.7 H536.8" stroke="#444" stroke-width="1.6"/>
<path d="M540.3 442.6 H618" stroke="#a6a6a6" stroke-width="0.9"/>
<rect x="577.9" y="437.3" width="3" height="9.3" fill="#4a4a4a"/>
<path d="M621.1 442.7 H627.5 M624.3 439.5 V445.9" stroke="#444" stroke-width="1.6"/>
</svg>
</div>
</body>
</html>
